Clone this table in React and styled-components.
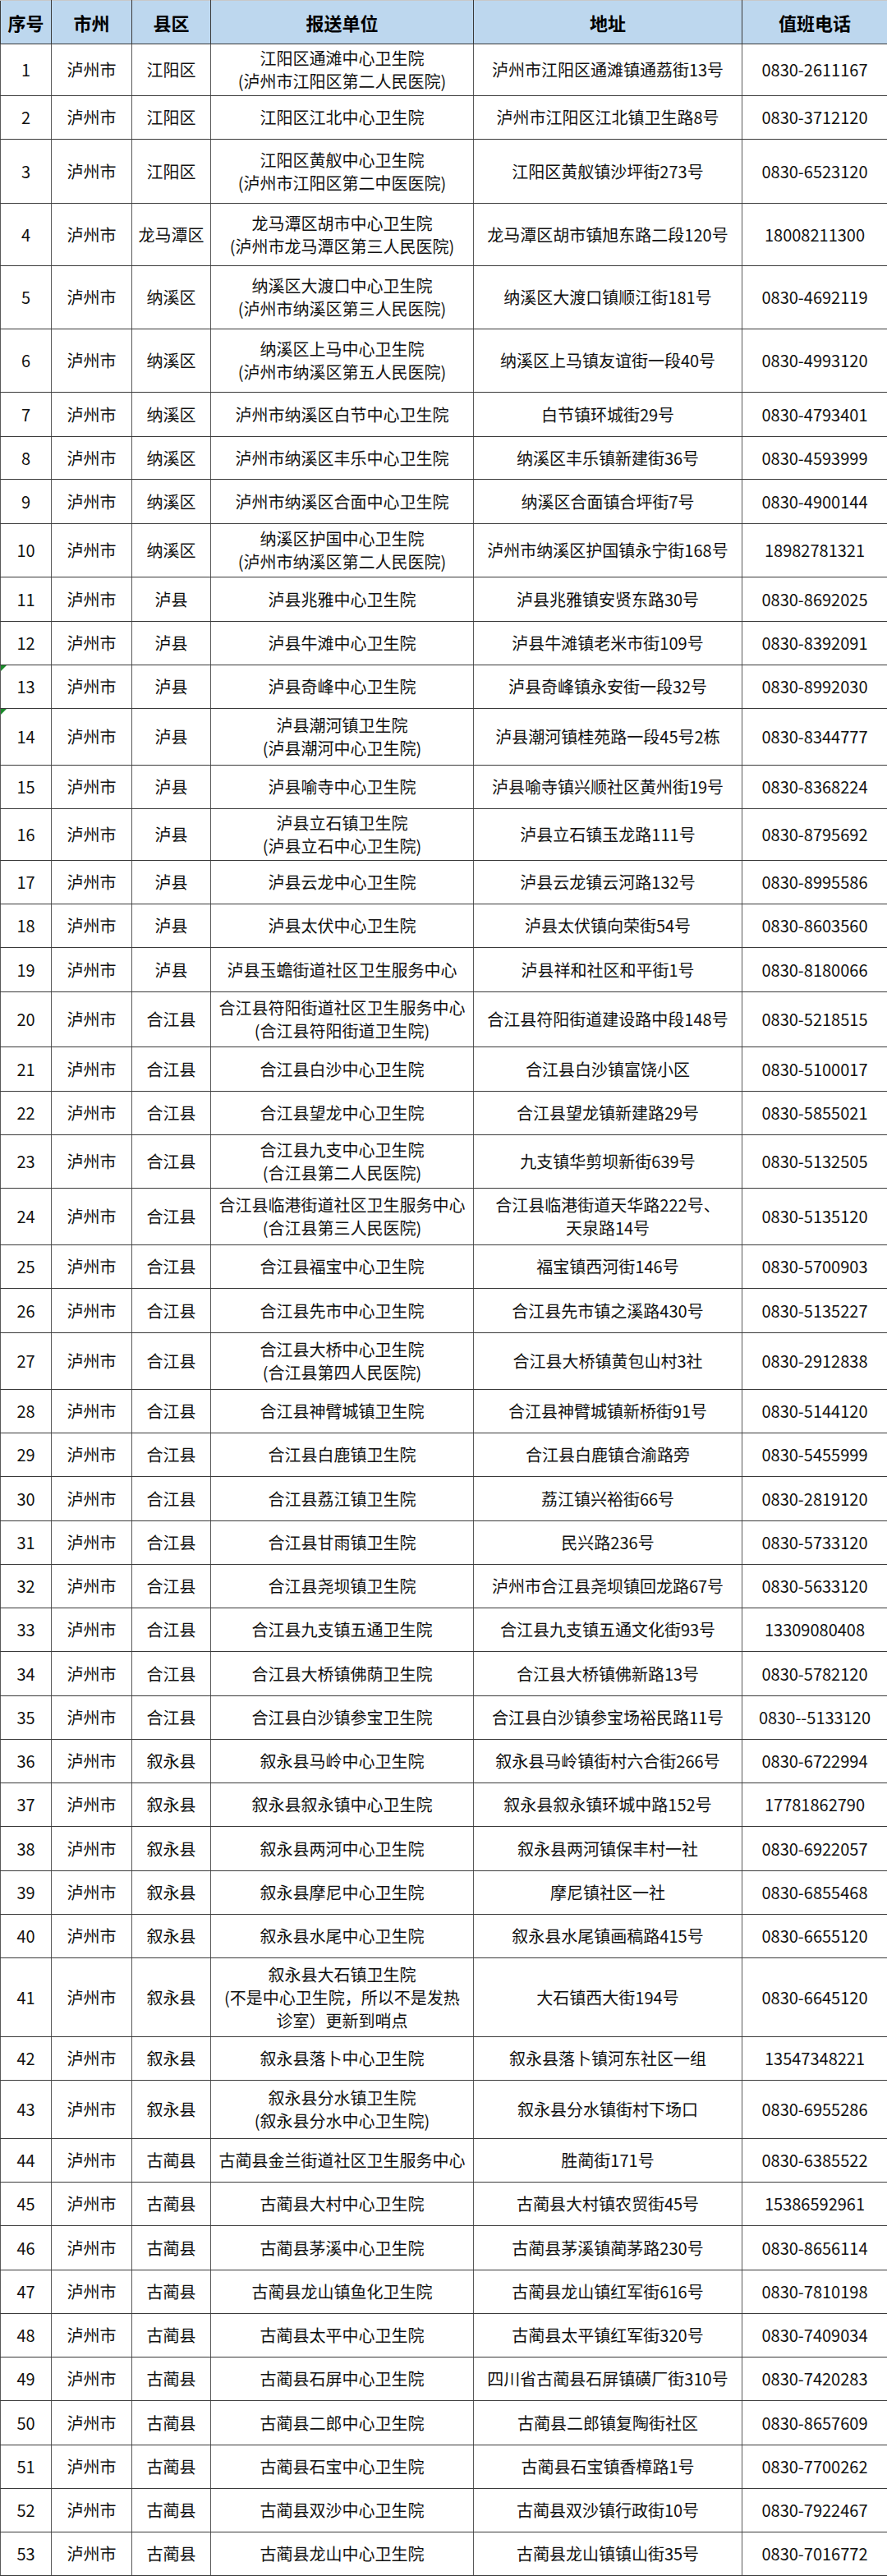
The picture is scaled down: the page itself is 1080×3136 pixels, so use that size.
import styled, { createGlobalStyle } from "styled-components";

const GlobalStyle = createGlobalStyle`
  body {
    margin: 0;
    background: #ffffff;
    font-family: "Noto Sans CJK SC", "Noto Sans", sans-serif;
    color: #000000;
  }
`;

// [序号, 市州, 县区, 报送单位, 地址, 值班电话, 行高]
const rows = [
  [1, "泸州市", "江阳区", "江阳区通滩中心卫生院\n(泸州市江阳区第二人民医院)", "泸州市江阳区通滩镇通荔街13号", "0830-2611167", 63],
  [2, "泸州市", "江阳区", "江阳区江北中心卫生院", "泸州市江阳区江北镇卫生路8号", "0830-3712120", 53],
  [3, "泸州市", "江阳区", "江阳区黄舣中心卫生院\n(泸州市江阳区第二中医医院)", "江阳区黄舣镇沙坪街273号", "0830-6523120", 78],
  [4, "泸州市", "龙马潭区", "龙马潭区胡市中心卫生院\n(泸州市龙马潭区第三人民医院)", "龙马潭区胡市镇旭东路二段120号", "18008211300", 76],
  [5, "泸州市", "纳溪区", "纳溪区大渡口中心卫生院\n(泸州市纳溪区第三人民医院)", "纳溪区大渡口镇顺江街181号", "0830-4692119", 77],
  [6, "泸州市", "纳溪区", "纳溪区上马中心卫生院\n(泸州市纳溪区第五人民医院)", "纳溪区上马镇友谊街一段40号", "0830-4993120", 77],
  [7, "泸州市", "纳溪区", "泸州市纳溪区白节中心卫生院", "白节镇环城街29号", "0830-4793401", 54],
  [8, "泸州市", "纳溪区", "泸州市纳溪区丰乐中心卫生院", "纳溪区丰乐镇新建街36号", "0830-4593999", 52],
  [9, "泸州市", "纳溪区", "泸州市纳溪区合面中心卫生院", "纳溪区合面镇合坪街7号", "0830-4900144", 54],
  [10, "泸州市", "纳溪区", "纳溪区护国中心卫生院\n(泸州市纳溪区第二人民医院)", "泸州市纳溪区护国镇永宁街168号", "18982781321", 65],
  [11, "泸州市", "泸县", "泸县兆雅中心卫生院", "泸县兆雅镇安贤东路30号", "0830-8692025", 54],
  [12, "泸州市", "泸县", "泸县牛滩中心卫生院", "泸县牛滩镇老米市街109号", "0830-8392091", 53],
  [13, "泸州市", "泸县", "泸县奇峰中心卫生院", "泸县奇峰镇永安街一段32号", "0830-8992030", 53, true],
  [14, "泸州市", "泸县", "泸县潮河镇卫生院\n(泸县潮河中心卫生院)", "泸县潮河镇桂苑路一段45号2栋", "0830-8344777", 69, true],
  [15, "泸州市", "泸县", "泸县喻寺中心卫生院", "泸县喻寺镇兴顺社区黄州街19号", "0830-8368224", 53],
  [16, "泸州市", "泸县", "泸县立石镇卫生院\n(泸县立石中心卫生院)", "泸县立石镇玉龙路111号", "0830-8795692", 63],
  [17, "泸州市", "泸县", "泸县云龙中心卫生院", "泸县云龙镇云河路132号", "0830-8995586", 53],
  [18, "泸州市", "泸县", "泸县太伏中心卫生院", "泸县太伏镇向荣街54号", "0830-8603560", 53],
  [19, "泸州市", "泸县", "泸县玉蟾街道社区卫生服务中心", "泸县祥和社区和平街1号", "0830-8180066", 54],
  [20, "泸州市", "合江县", "合江县符阳街道社区卫生服务中心\n(合江县符阳街道卫生院)", "合江县符阳街道建设路中段148号", "0830-5218515", 67],
  [21, "泸州市", "合江县", "合江县白沙中心卫生院", "合江县白沙镇富饶小区", "0830-5100017", 54],
  [22, "泸州市", "合江县", "合江县望龙中心卫生院", "合江县望龙镇新建路29号", "0830-5855021", 53],
  [23, "泸州市", "合江县", "合江县九支中心卫生院\n(合江县第二人民医院)", "九支镇华剪坝新街639号", "0830-5132505", 65],
  [24, "泸州市", "合江县", "合江县临港街道社区卫生服务中心\n(合江县第三人民医院)", "合江县临港街道天华路222号、\n天泉路14号", "0830-5135120", 69],
  [25, "泸州市", "合江县", "合江县福宝中心卫生院", "福宝镇西河街146号", "0830-5700903", 53],
  [26, "泸州市", "合江县", "合江县先市中心卫生院", "合江县先市镇之溪路430号", "0830-5135227", 54],
  [27, "泸州市", "合江县", "合江县大桥中心卫生院\n(合江县第四人民医院)", "合江县大桥镇黄包山村3社", "0830-2912838", 69],
  [28, "泸州市", "合江县", "合江县神臂城镇卫生院", "合江县神臂城镇新桥街91号", "0830-5144120", 53],
  [29, "泸州市", "合江县", "合江县白鹿镇卫生院", "合江县白鹿镇合渝路旁", "0830-5455999", 53],
  [30, "泸州市", "合江县", "合江县荔江镇卫生院", "荔江镇兴裕街66号", "0830-2819120", 54],
  [31, "泸州市", "合江县", "合江县甘雨镇卫生院", "民兴路236号", "0830-5733120", 53],
  [32, "泸州市", "合江县", "合江县尧坝镇卫生院", "泸州市合江县尧坝镇回龙路67号", "0830-5633120", 53],
  [33, "泸州市", "合江县", "合江县九支镇五通卫生院", "合江县九支镇五通文化街93号", "13309080408", 53],
  [34, "泸州市", "合江县", "合江县大桥镇佛荫卫生院", "合江县大桥镇佛新路13号", "0830-5782120", 54],
  [35, "泸州市", "合江县", "合江县白沙镇参宝卫生院", "合江县白沙镇参宝场裕民路11号", "0830--5133120", 53],
  [36, "泸州市", "叙永县", "叙永县马岭中心卫生院", "叙永县马岭镇街村六合街266号", "0830-6722994", 53],
  [37, "泸州市", "叙永县", "叙永县叙永镇中心卫生院", "叙永县叙永镇环城中路152号", "17781862790", 53],
  [38, "泸州市", "叙永县", "叙永县两河中心卫生院", "叙永县两河镇保丰村一社", "0830-6922057", 54],
  [39, "泸州市", "叙永县", "叙永县摩尼中心卫生院", "摩尼镇社区一社", "0830-6855468", 53],
  [40, "泸州市", "叙永县", "叙永县水尾中心卫生院", "叙永县水尾镇画稿路415号", "0830-6655120", 53],
  [41, "泸州市", "叙永县", "叙永县大石镇卫生院\n(不是中心卫生院，所以不是发热\n诊室）更新到哨点", "大石镇西大街194号", "0830-6645120", 96],
  [42, "泸州市", "叙永县", "叙永县落卜中心卫生院", "叙永县落卜镇河东社区一组", "13547348221", 53],
  [43, "泸州市", "叙永县", "叙永县分水镇卫生院\n(叙永县分水中心卫生院)", "叙永县分水镇街村下场口", "0830-6955286", 71],
  [44, "泸州市", "古蔺县", "古蔺县金兰街道社区卫生服务中心", "胜蔺街171号", "0830-6385522", 53],
  [45, "泸州市", "古蔺县", "古蔺县大村中心卫生院", "古蔺县大村镇农贸街45号", "15386592961", 53],
  [46, "泸州市", "古蔺县", "古蔺县茅溪中心卫生院", "古蔺县茅溪镇蔺茅路230号", "0830-8656114", 54],
  [47, "泸州市", "古蔺县", "古蔺县龙山镇鱼化卫生院", "古蔺县龙山镇红军街616号", "0830-7810198", 53],
  [48, "泸州市", "古蔺县", "古蔺县太平中心卫生院", "古蔺县太平镇红军街320号", "0830-7409034", 53],
  [49, "泸州市", "古蔺县", "古蔺县石屏中心卫生院", "四川省古蔺县石屏镇磺厂街310号", "0830-7420283", 53],
  [50, "泸州市", "古蔺县", "古蔺县二郎中心卫生院", "古蔺县二郎镇复陶街社区", "0830-8657609", 54],
  [51, "泸州市", "古蔺县", "古蔺县石宝中心卫生院", "古蔺县石宝镇香樟路1号", "0830-7700262", 53],
  [52, "泸州市", "古蔺县", "古蔺县双沙中心卫生院", "古蔺县双沙镇行政街10号", "0830-7922467", 53],
  [53, "泸州市", "古蔺县", "古蔺县龙山中心卫生院", "古蔺县龙山镇镇山街35号", "0830-7016772", 53],
];

const App = () => {
  return (
    <>
      <GlobalStyle />
      <Sheet>
        <colgroup>
          <col style={{ width: 62 }} />
          <col style={{ width: 98 }} />
          <col style={{ width: 96 }} />
          <col style={{ width: 320 }} />
          <col style={{ width: 327 }} />
          <col style={{ width: 177 }} />
        </colgroup>
        <thead>
          <HeadRow>
            <HeadCell>序号</HeadCell>
            <HeadCell>市州</HeadCell>
            <HeadCell>县区</HeadCell>
            <HeadCell>报送单位</HeadCell>
            <HeadCell>地址</HeadCell>
            <HeadCell>值班电话</HeadCell>
          </HeadRow>
        </thead>
        <tbody>
          {rows.map(([no, city, county, unit, addr, phone, h, flag]) => (
            <Row key={no} $h={h}>
              <Cell $flag={flag}>{no}</Cell>
              <Cell>{city}</Cell>
              <Cell>{county}</Cell>
              <Cell>{unit}</Cell>
              <Cell>{addr}</Cell>
              <Cell>{phone}</Cell>
            </Row>
          ))}
        </tbody>
      </Sheet>
    </>
  );
};

const Sheet = styled.table`
  width: 1080px;
  table-layout: fixed;
  border-collapse: collapse;
  font-family: "Noto Sans CJK SC", "Noto Sans", sans-serif;
`;

const HeadRow = styled.tr`
  height: 53px;
  background-color: #bdd7ee;
`;

const HeadCell = styled.th`
  border: 1px solid #3a3a3a;
  border-top-color: #c8c8c8;
  font-size: 22px;
  font-weight: 700;
  text-align: center;
  vertical-align: middle;
  padding: 0;
  color: #000;
`;

const Row = styled.tr`
  height: ${(p) => p.$h}px;
`;

const Cell = styled.td`
  position: relative;
  border: 1px solid #3a3a3a;
  border-left-color: #5a5a5a;
  border-right-color: #5a5a5a;
  font-size: 20px;
  line-height: 28px;
  text-align: center;
  vertical-align: middle;
  white-space: pre-line;
  padding: 0 2px;
  color: #111;

  &::before {
    content: "";
    display: ${(p) => (p.$flag ? "block" : "none")};
    position: absolute;
    top: 0;
    left: 0;
    border-top: 7px solid #1a8a2a;
    border-right: 7px solid transparent;
  }
`;

export default App;
